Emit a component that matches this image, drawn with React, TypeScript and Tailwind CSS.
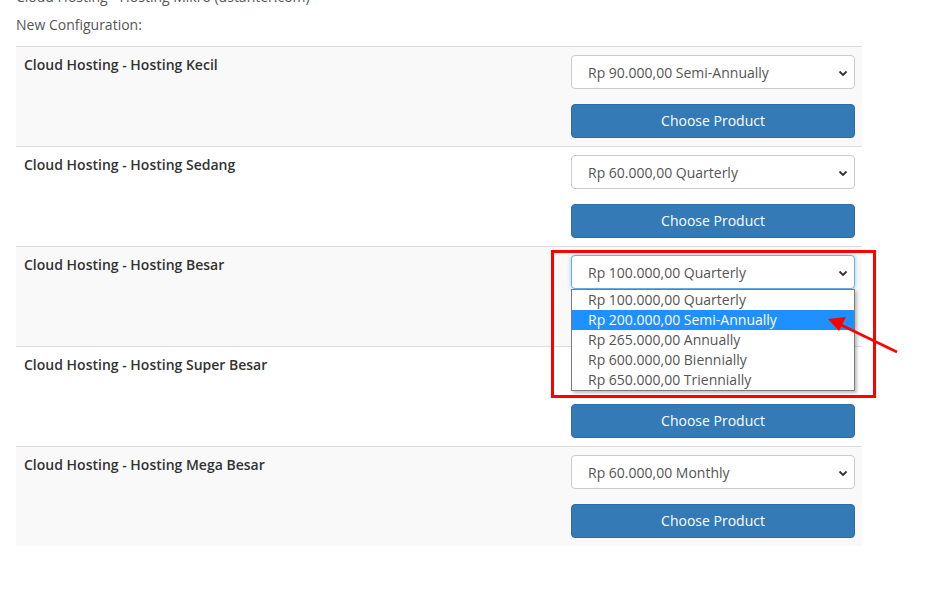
import React from 'react';

type Row = { name: string; price: string; open?: boolean; covered?: boolean };

const rows: Row[] = [
  { name: 'Cloud Hosting - Hosting Kecil', price: 'Rp 90.000,00 Semi-Annually' },
  { name: 'Cloud Hosting - Hosting Sedang', price: 'Rp 60.000,00 Quarterly' },
  { name: 'Cloud Hosting - Hosting Besar', price: 'Rp 100.000,00 Quarterly', open: true },
  { name: 'Cloud Hosting - Hosting Super Besar', price: 'Rp 100.000,00 Quarterly', covered: true },
  { name: 'Cloud Hosting - Hosting Mega Besar', price: 'Rp 60.000,00 Monthly' },
];

const options = [
  'Rp 100.000,00 Quarterly',
  'Rp 200.000,00 Semi-Annually',
  'Rp 265.000,00 Annually',
  'Rp 600.000,00 Biennially',
  'Rp 650.000,00 Triennially',
];

function Chevron() {
  return (
    <svg width="10" height="7" viewBox="0 0 10 7" className="absolute right-[6px] top-[14px]">
      <path d="M1.5 1.5 L5 5 L8.5 1.5" fill="none" stroke="#333" strokeWidth="1.8" />
    </svg>
  );
}

function Dropdown() {
  return (
    <>
      <div className="absolute left-[-20px] top-[-5px] w-[325px] h-[148px] border-[3px] border-[#ff0000] z-20 pointer-events-none" />
      <div className="absolute left-0 top-[34px] w-[284px] bg-white border border-[#7a7a7a] shadow-[2px_2px_3px_rgba(0,0,0,0.25)] z-10">
        {options.map((o, i) => (
          <div
            key={o}
            className={`h-[20px] leading-[20px] pl-[16px] text-[14px] ${i === 1 ? 'bg-[#1e90ff] text-white' : 'text-[#555]'}`}
          >
            {o}
          </div>
        ))}
      </div>
      <svg width="80" height="40" viewBox="0 0 80 40" className="absolute left-[256px] top-[58px] z-30 overflow-visible">
        <line x1="70" y1="39" x2="10" y2="10" stroke="#ff0000" strokeWidth="2.5" />
        <polygon points="1,6 19,4 12,18" fill="#ff0000" />
      </svg>
    </>
  );
}

export default function App() {
  return (
    <div className="w-[927px] h-[602px] overflow-hidden bg-white" style={{ fontFamily: "'Open Sans', sans-serif" }}>
      <div className="px-[16px] w-[878px]">
        <div className="-mt-[13px] text-[14px] leading-[20px] text-[#555]">Cloud Hosting - Hosting Mikro (ustanter.com)</div>
        <div className="mt-[8px] text-[14px] leading-[20px] text-[#555]">New Configuration:</div>
        <div className="mt-[11px]">
          {rows.map((r, i) => (
            <div
              key={r.name}
              className={`flex border-t border-[#ddd] h-[100px] ${i % 2 === 0 ? 'bg-[#f9f9f9]' : 'bg-white'}`}
            >
              <div className="flex-1 p-[8px] text-[14px] leading-[20px] font-semibold text-[#333]">{r.name}</div>
              <div className="w-[300px] pt-[8px] pb-[8px] pl-[9px] pr-[7px] flex flex-col gap-[15px]">
                <div className="relative">
                  <div
                    className={`relative h-[34px] rounded-[4px] bg-white border pl-[16px] text-[14px] leading-[33px] text-[#555] ${
                      r.open ? 'border-[#66afe9] shadow-[0_0_4px_rgba(102,175,233,0.6)]' : 'border-[#ccc]'
                    } ${r.covered ? 'invisible' : ''}`}
                  >
                    {r.price}
                    <Chevron />
                  </div>
                  {r.open && <Dropdown />}
                </div>
                <button className="h-[34px] rounded-[4px] bg-[#337ab7] border border-[#2e6da4] text-white text-[14px] leading-[20px]">
                  Choose Product
                </button>
              </div>
            </div>
          ))}
        </div>
      </div>
    </div>
  );
}
